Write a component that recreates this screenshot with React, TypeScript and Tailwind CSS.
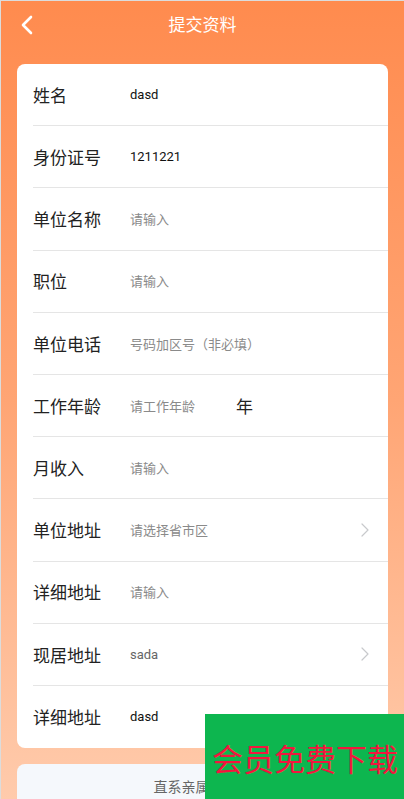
import * as React from 'react';

type Row = { label: string; value?: string; placeholder?: string; arrow?: boolean; suffix?: string; muted?: boolean };

const rows: Row[] = [
  { label: '姓名', value: 'dasd' },
  { label: '身份证号', value: '1211221' },
  { label: '单位名称', placeholder: '请输入' },
  { label: '职位', placeholder: '请输入' },
  { label: '单位电话', placeholder: '号码加区号（非必填）' },
  { label: '工作年龄', placeholder: '请工作年龄', suffix: '年' },
  { label: '月收入', placeholder: '请输入' },
  { label: '单位地址', placeholder: '请选择省市区', arrow: true },
  { label: '详细地址', placeholder: '请输入' },
  { label: '现居地址', value: 'sada', arrow: true, muted: true },
  { label: '详细地址', value: 'dasd' },
];

function Chevron({ className }: { className?: string }) {
  return (
    <svg className={className} width="10" height="16" viewBox="0 0 10 16" fill="none">
      <path d="M2 2l6 6-6 6" stroke="currentColor" strokeWidth="1.2" strokeLinecap="round" strokeLinejoin="round" />
    </svg>
  );
}

export default function App() {
  return (
    <div
      className="relative h-[799px] w-[404px] overflow-hidden border-l border-t border-[#dcdcdc] bg-gradient-to-b from-[#ff8b4e] via-[#ffa574] to-[#ffcbac]"
      style={{ fontFamily: '"Noto Sans CJK SC", "Noto Sans", sans-serif' }}
    >
      {/* header */}
      <div className="relative flex h-[47px] items-center justify-center pb-[2px]">
        <svg className="absolute left-[19px] top-[14px]" width="14" height="20" viewBox="0 0 14 20" fill="none">
          <path d="M11 2L3 10l8 8" stroke="white" strokeWidth="2.6" strokeLinecap="round" strokeLinejoin="round" />
        </svg>
        <span className="text-[17px] text-white">提交资料</span>
      </div>

      {/* form card */}
      <div className="mx-[16px] mt-[16px] rounded-[8px] bg-white pl-[16px]">
        {rows.map((r, i) => (
          <div
            key={i}
            className={`flex h-[62.2px] items-center pr-[18px] ${i < rows.length - 1 ? 'border-b border-[#e5e5e5]' : ''}`}
          >
            <span className="w-[97px] shrink-0 text-[17px] text-[#222]">{r.label}</span>
            {r.value ? (
              <span
                className={`text-[13px] ${r.muted ? 'text-[#666]' : 'text-[#111]'}`}
                style={{ fontFamily: 'Roboto, "Noto Sans CJK SC", sans-serif' }}
              >
                {r.value}
              </span>
            ) : (
              <span className="text-[13px] text-[#8a8a8a]">{r.placeholder}</span>
            )}
            {r.suffix && <span className="ml-[41px] text-[17px] text-[#222]">{r.suffix}</span>}
            {r.arrow && <Chevron className="ml-auto text-[#c8c9cc]" />}
          </div>
        ))}
      </div>

      {/* next card */}
      <div className="mx-[16px] mt-[16px] flex h-[44px] items-center justify-center rounded-[8px] bg-[#f5f8fc]">
        <span className="text-[14px] text-[#666]">直系亲属联系人</span>
      </div>

      {/* overlay badge */}
      <div className="absolute left-[204px] top-[713px] flex h-[86px] w-[200px] items-center justify-center bg-[#0db64f]">
        <span className="text-[31px] leading-none text-[#f2163e]">会员免费下载</span>
      </div>
    </div>
  );
}
